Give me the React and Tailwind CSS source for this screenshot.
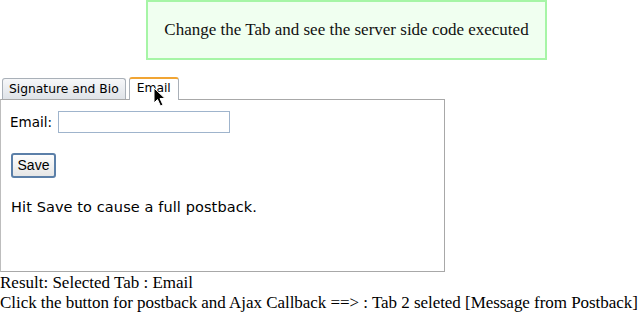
export default function App() {
  const serif = { fontFamily: '"Liberation Serif", "Times New Roman", serif' };
  const verdana = { fontFamily: '"DejaVu Sans", Verdana, sans-serif' };
  return (
    <div className="w-[639px] h-[312px] bg-white text-black overflow-hidden relative" style={serif}>
      <div className="flex pl-[146px]">
        <div className="w-[401px] h-[60px] border-2 border-[#a6f5a6] bg-[#f0fff0] flex items-center justify-center text-[17px] text-[#111]">
          Change the Tab and see the server side code executed
        </div>
      </div>
      <div className="mt-[16px] w-[445px]" style={verdana}>
        <div className="flex items-end h-[23px] pl-[2px] gap-[3px]">
          <div className="h-[21px] px-[6px] border border-[#a9b0b8] border-b-0 rounded-t-[3px] bg-gradient-to-b from-[#f6f7f9] to-[#dfe3e8] text-[12.3px] leading-[20px] text-black">
            Signature and Bio
          </div>
          <div className="h-[23px] px-[7px] border border-[#a9b0b8] border-t-2 border-t-[#f1a534] border-b-0 rounded-t-[3px] bg-white text-[12.3px] leading-[19px] text-black relative z-10 -mb-px">
            Email
          </div>
        </div>
        <div className="h-[173px] border border-[#a8a8a8] border-l-[#bdbdbd] bg-white pl-[9px] pt-[11px] text-[13.5px]">
          <div className="flex items-center gap-[6px]">
            <span>Email:</span>
            <div className="w-[172px] h-[22px] border border-[#9fb4cc] bg-white"></div>
          </div>
          <div className="mt-[20px] pl-[1px]">
            <div className="inline-flex items-center justify-center w-[45px] h-[25px] border-2 border-[#5b7fa8] rounded-[3px] bg-gradient-to-b from-[#fdfdfd] to-[#e6e6e6] text-[14px] text-black" style={{ fontFamily: '"Liberation Sans", Arial, sans-serif' }}>
              Save
            </div>
          </div>
          <div className="mt-[19px] pl-[1px] text-[14.5px] tracking-[0.1px]">Hit Save to cause a full postback.</div>
        </div>
      </div>
      <div className="text-[17px] leading-[20px] mt-[1px]">
        <div>Result: Selected Tab : Email</div>
        <div className="whitespace-nowrap tracking-[-0.04px]">Click the button for postback and Ajax Callback ==&gt; : Tab 2 seleted [Message from Postback]</div>
      </div>
      <svg className="absolute z-20 left-[153px] top-[87px]" width="16" height="22" viewBox="0 0 16 22">
        <path d="M1 1 L1 16 L4.5 12.5 L7.5 19 L10 18 L7 11.5 L12 11.5 Z" fill="#000" stroke="#fff" strokeWidth="1" strokeLinejoin="round" />
      </svg>
    </div>
  );
}
